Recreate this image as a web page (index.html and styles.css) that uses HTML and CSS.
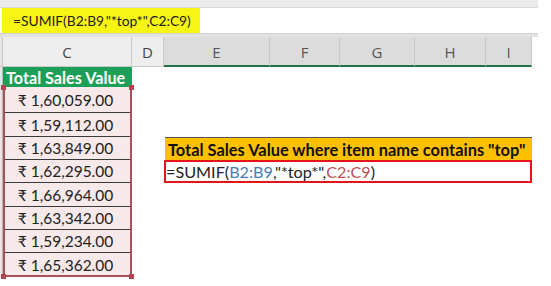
FILE: index.html
```html
<!DOCTYPE html>
<html>
<head>
<meta charset="utf-8">
<link rel="stylesheet" href="styles.css">
</head>
<body>
<div class="sheet">
  <div class="topband"></div>
  <div class="fbar">
    <div class="fbox">=SUMIF(B2:B9,"*top*",C2:C9)</div>
  </div>
  <div class="gapband"></div>
  <div class="grid">
    <div class="hdr rh"></div>
    <div class="hdr">C</div>
    <div class="hdr">D</div>
    <div class="hdr sel">E</div>
    <div class="hdr sel">F</div>
    <div class="hdr sel">G</div>
    <div class="hdr sel">H</div>
    <div class="hdr sel last">I</div>

    <div class="rhcol"></div>
    <div class="title">Total Sales Value</div>

    <div class="values">
      <div class="val">₹ 1,60,059.00</div>
      <div class="val">₹ 1,59,112.00</div>
      <div class="val">₹ 1,63,849.00</div>
      <div class="val">₹ 1,62,295.00</div>
      <div class="val">₹ 1,66,964.00</div>
      <div class="val">₹ 1,63,342.00</div>
      <div class="val">₹ 1,59,234.00</div>
      <div class="val">₹ 1,65,362.00</div>
      <span class="handle h-tl"></span>
      <span class="handle h-tr"></span>
      <span class="handle h-bl"></span>
      <span class="handle h-br"></span>
    </div>

    <div class="label">Total Sales Value where item name contains "top"</div>
    <div class="formula">=SUMIF(<span class="ref-b">B2:B9</span>,"*top*",<span class="ref-c">C2:C9</span>)</div>
  </div>
</div>
</body>
</html>
```

FILE: styles.css
```css
html, body {
  margin: 0;
  padding: 0;
  background: #ffffff;
}
.sheet {
  width: 551px;
  height: 286px;
  overflow: hidden;
  font-family: Lato, "Liberation Sans", sans-serif;
}
.topband {
  width: 538px;
  height: 8px;
  background: #ebebeb;
  border-bottom: 1px solid #d8d8d8;
  box-sizing: border-box;
}
.fbar {
  height: 25px;
  display: flex;
  padding-left: 2px;
}
.fbox {
  width: 198px;
  background: #f7f514;
  color: #222;
  font-size: 13.8px;
  line-height: 25px;
  padding-left: 11px;
  box-sizing: border-box;
  white-space: nowrap;
}
.gapband {
  width: 538px;
  height: 3px;
  background: #e2e2e2;
  border-top: 1px solid #d0d0d0;
}
.grid {
  display: grid;
  grid-template-columns: 3px 129px 32px 106px 70px 75px 71px 46px;
  grid-template-rows: 30px 20px 26px 24px 23px 23px 24px 23px 23px 24px;
}
.hdr {
  background: #eeeeee;
  border-right: 1px solid #c9c9c9;
  border-bottom: 1px solid #c9c9c9;
  font-family: "Open Sans", sans-serif;
  font-size: 15px;
  color: #444;
  display: flex;
  align-items: center;
  justify-content: center;
  box-sizing: border-box;
}
.hdr.rh {
  background: #e6e6e6;
}
.hdr.sel {
  background: #dcdcdc;
  color: #555;
  border-bottom: 2px solid #217346;
  padding-top: 2px;
}
.rhcol {
  grid-column: 1;
  grid-row: 2 / 11;
  background: #e6e6e6;
  border-right: 1px solid #b8b8b8;
}
.title {
  grid-column: 2;
  grid-row: 2;
  background: #1e9f59;
  color: #ffffff;
  font-weight: bold;
  font-size: 16.2px;
  display: flex;
  align-items: center;
  padding-left: 3px;
  white-space: nowrap;
}
.values {
  grid-column: 2;
  grid-row: 3 / 11;
  position: relative;
  display: grid;
  grid-template-rows: 26px 24px 23px 23px 24px 23px 23px 24px;
  border-left: 2px solid #a9525c;
  border-right: 2px solid #a9525c;
  border-bottom: 2px solid #a9525c;
  background: #f7e8e9;
}
.val {
  border-bottom: 1px solid #3a3a3a;
  font-size: 15.5px;
  color: #222;
  display: flex;
  align-items: center;
  justify-content: center;
  padding-right: 4px;
  white-space: nowrap;
}
.val:last-of-type {
  border-bottom: none;
}
.handle {
  position: absolute;
  width: 5px;
  height: 5px;
  background: #b5434f;
}
.h-tl { left: -4px; top: -2px; }
.h-tr { right: -4px; top: -2px; }
.h-bl { left: -4px; bottom: -4px; }
.h-br { right: -4px; bottom: -4px; }
.label {
  grid-column: 4 / 9;
  grid-row: 5;
  margin-left: 1px;
  background: #ffc000;
  border-top: 1px solid #555;
  font-weight: bold;
  font-size: 16.4px;
  color: #111;
  display: flex;
  align-items: center;
  padding-left: 3px;
  white-space: nowrap;
}
.formula {
  grid-column: 4 / 9;
  grid-row: 6;
  border: 2px solid #e5141b;
  font-size: 16.2px;
  color: #222;
  display: flex;
  align-items: center;
  white-space: nowrap;
  box-sizing: border-box;
}
.ref-b { color: #4b7bb7; }
.ref-c { color: #c2504e; }
```
